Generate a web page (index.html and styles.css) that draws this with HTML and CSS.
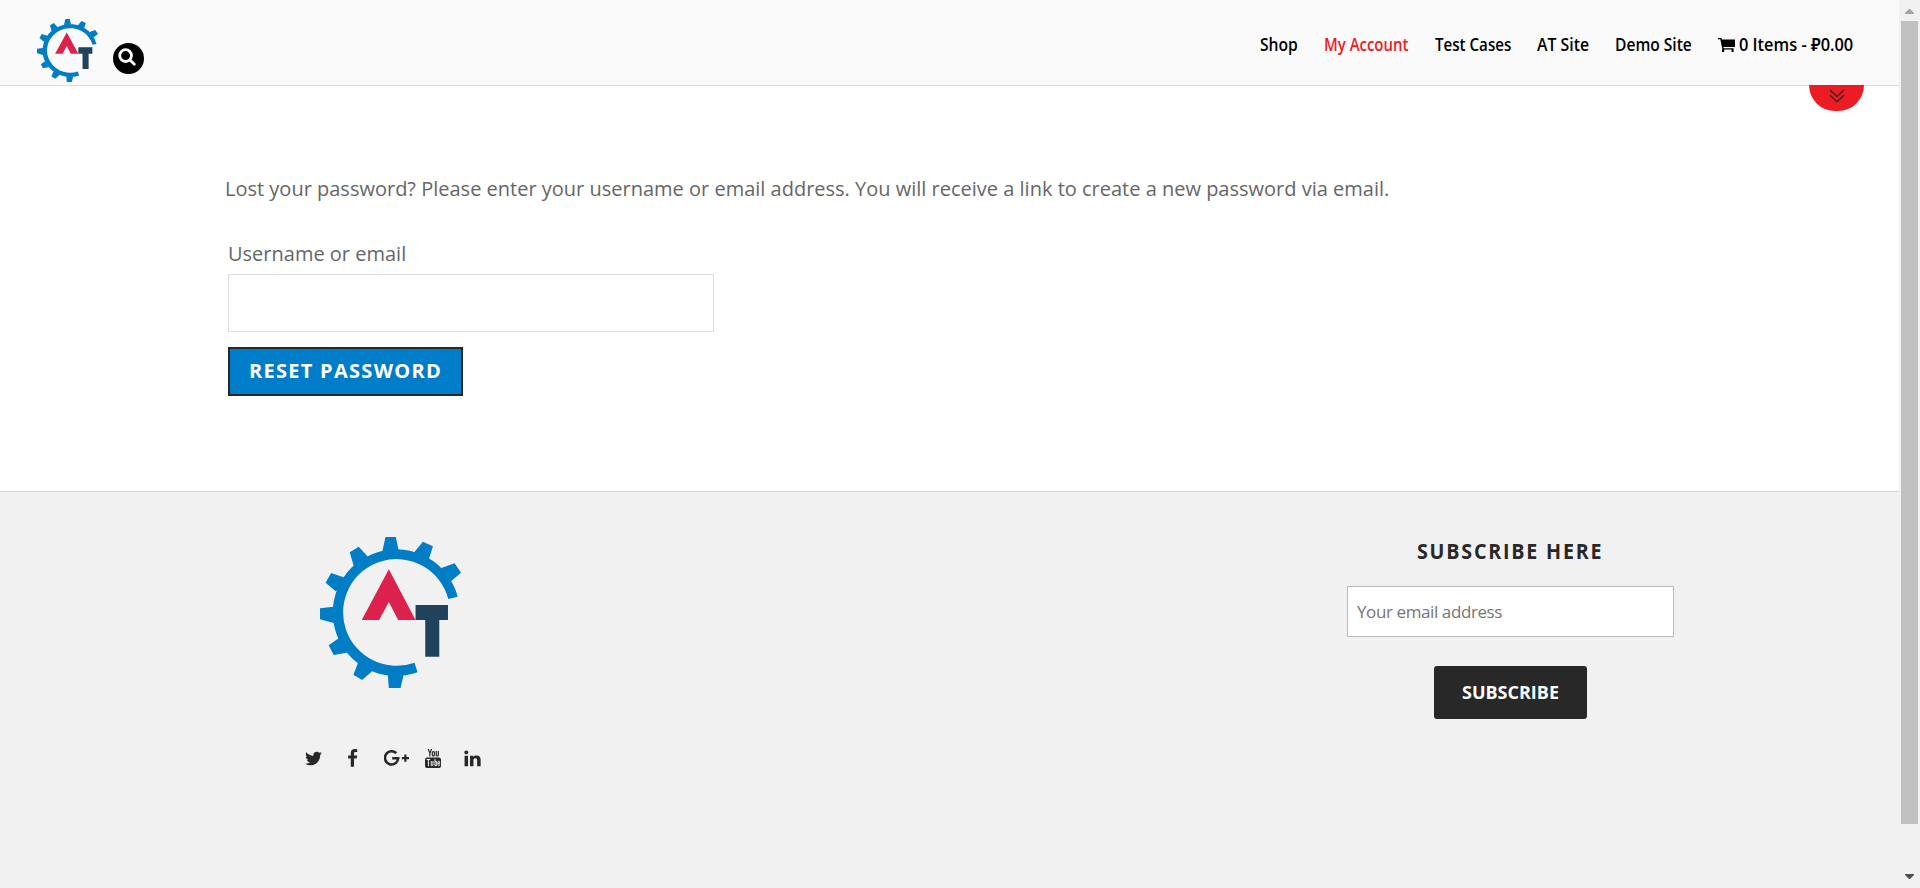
FILE: index.html
```html
<!DOCTYPE html>
<html lang="en">
<head>
<meta charset="utf-8">
<title>My Account</title>
<link rel="stylesheet" href="styles.css">
</head>
<body>
<svg width="0" height="0" class="defs" aria-hidden="true">
  <symbol id="logo" viewBox="61 51 422 453" preserveAspectRatio="none">
    <g fill="#007dc5">
      <path d="M473 230A190 190 0 1 0 353 457L344 428A160 160 0 1 1 445 237Z"/>
      <path d="M248 92L257 51H288L296 90L272 105ZM343 97L369 65L399 79L387 117L365 115ZM424 144L464 130L483 158L454 183L435 170ZM162 138L150 97L177 80L203 109L185 130ZM108 214L78 188L94 159L132 172L125 200ZM102 309L61 298V265L101 260L115 285ZM141 398L102 405L87 376L117 355L138 375ZM217 454L187 480L161 464L175 428L200 435ZM311 466L302 504H267L264 465L285 450Z"/>
    </g>
    <path fill="#dc214c" d="M267 148L347 300H295L267 246L238 300H186Z"/>
    <path fill="#20425a" d="M347 255H444V300H418V410H376V300H347Z"/>
  </symbol>
</svg>
<div class="window">
  <div class="page">
    <header class="header">
      <div class="brand">
        <svg class="logo-small"><use href="#logo"/></svg>
        <span class="search"><svg viewBox="0 0 18 18"><circle cx="7.6" cy="7.6" r="5.9"/><path d="M12 12l4.300 4.200"/></svg></span>
      </div>
      <nav class="nav">
        <a class="n1">Shop</a><a class="n2 active">My Account</a><a class="n3">Test Cases</a><a class="n4">AT Site</a><a class="n5">Demo Site</a>
        <svg class="cart" viewBox="0 0 17 15"><path d="M0 0h3.400l.5 1.400H17v7.600H5.300l.3 1.300h10v1.200H4.400L2.300 1.300H0zM4 11.400h2.200v2.600H4zM13.600 11.400h2v2.600h-2z"/></svg><a class="n6">0 Items - ₽0.00</a>
      </nav>
      <div class="toggle"><svg viewBox="0 0 16 14"><path d="M1 1l7 6.500L15 1M1 6.200l7 6.500 7-6.500"/></svg></div>
    </header>
    <main class="main">
      <p class="message">Lost your password? Please enter your username or email address. You will receive a link to create a new password via email.</p>
      <form class="form">
        <label for="user">Username or email</label>
        <input id="user" class="user" type="text">
        <button class="reset" type="button">RESET PASSWORD</button>
      </form>
    </main>
    <footer class="footer">
      <div class="about">
        <svg class="logo-big"><use href="#logo"/></svg>
        <div class="social">
          <svg class="ic" viewBox="0 0 1792 1792"><path d="M1684 408q-67 98-162 167 1 14 1 42 0 130-38 259.500t-115.500 248.500-184.500 210.500-258 146-323 54.500q-271 0-496-145 35 4 78 4 225 0 401-138-105-2-188-64.500t-114-159.500q33 5 61 5 43 0 85-11-112-23-185.500-111.500t-73.500-205.500v-4q68 38 146 41-66-44-105-115t-39-154q0-88 44-163 121 149 294.500 238.500t371.500 99.500q-8-38-8-74 0-134 94.500-228.500t228.500-94.500q140 0 236 102 109-21 205-78-37 115-142 178 93-10 186-50z"/></svg>
          <svg class="ic" viewBox="0 0 1792 1792"><path d="M1343 12v264h-157q-86 0-116 36t-30 108v189h293l-39 296h-254v759h-306v-759h-255v-296h255v-218q0-186 104-288.500t277-102.500q147 0 228 12z"/></svg>
          <svg class="ic gplus" viewBox="0 0 25 18"><path class="g" d="M12.300 4.200A6.600 6.600 0 1 0 14.200 9.200H8.200"/><path d="M20.300 5.600h2.200v2.500H25v2.200h-2.500v2.500h-2.200v-2.500h-2.500V8.100h2.500z"/></svg>
          <svg class="ic yt" viewBox="0 0 16 19"><g fill="none" stroke="#282828" stroke-width="1.200"><path d="M3.200 0l1.700 4.200L6.600 0M4.900 4v3.500"/><rect x="7.300" y="2.600" width="2.100" height="4.300" rx="1"/><path d="M11.200 2v4.200q0 .8.8.8t1.300-.7V2"/></g><rect y="8.600" width="16" height="10.400" rx="2"/><g fill="none" stroke="#f1f1f1"><path d="M1.600 10.500h3.600M3.400 10.500v6.600M6.200 12v4q0 .8.600.8t1.200-.7V12M10 10v7M10 12.500q1.700-.6 1.700.5v3q0 1.200-1.700.5M14.600 15.500q0 1.200-.8 1.200t-.8-1v-2.500q0-1 .8-1t.8 1v1.200H13"/></g></svg>
          <svg class="ic" viewBox="0 0 1792 1792"><path d="M477 625v991h-330v-991h330zm21-306q1 73-50.500 122t-135.500 49h-2q-82 0-132-49t-50-122q0-74 51.500-122.500t134.500-48.500 133 48.500 51 122.500zm1166 729v568h-329v-530q0-105-40.500-164.500t-126.500-59.500q-63 0-105.500 34.500t-63.500 85.500q-11 30-11 81v553h-329q2-399 2-647t-1-296l-1-48h329v144h-2q20-32 41-56t56.500-52 87-43.500 114.500-15.500q171 0 275 113.500t104 332.500z"/></svg>
        </div>
      </div>
      <form class="newsletter">
        <h4>SUBSCRIBE HERE</h4>
        <input class="email" type="email" placeholder="Your email address">
        <button class="subscribe" type="button">SUBSCRIBE</button>
      </form>
    </footer>
  </div>
  <div class="scrollbar">
    <svg class="arrow up" viewBox="0 0 9 5"><path d="M4 0h1l4 4v1H0V4z"/></svg>
    <div class="thumb"></div>
    <svg class="arrow down" viewBox="0 0 9 5"><path d="M0 0h9v1L5 5H4L0 1z"/></svg>
  </div>
</div>
</body>
</html>
```
FILE: styles.css
```css
* { box-sizing: border-box; }
body { margin: 0; font-family: "Open Sans", "Noto Sans", sans-serif; overflow: hidden; background: #fff; }
.defs { display: block; height: 0; }
.window { display: flex; height: 888px; }
.page { flex: 1; display: flex; flex-direction: column; }
.header { position: relative; height: 86px; background: #fafafa; border-bottom: 1px solid #ddd; display: flex; justify-content: space-between; }
.brand { display: flex; padding: 19px 0 0 37px; gap: 15px; }
.logo-small { width: 61px; height: 63px; }
.search { width: 31px; height: 31px; margin-top: 24px; border-radius: 50%; background: #000; padding: 5px; }
.search svg { display: block; width: 18px; height: 18px; fill: none; stroke: #fff; stroke-width: 2.8; stroke-linecap: round; }
.nav { display: flex; padding: 31px 45px 0 0; height: 58px; line-height: 27px; font-size: 18px; font-weight: 600; color: #000; }
.nav a { white-space: nowrap; transform-origin: left center; }
.nav .active { color: #ed1c24; }
.n1 { width: 64px; transform: scaleX(.87); }
.n2 { width: 111px; transform: scaleX(.83); }
.n3 { width: 102px; transform: scaleX(.84); }
.n4 { width: 78px; transform: scaleX(.88); }
.n5 { width: 103px; transform: scaleX(.865); }
.n6 { width: 115px; transform: scaleX(.91); }
.cart { width: 17px; height: 15px; margin: 7px 4px 0 0; }
.toggle { position: absolute; left: 1809px; top: 85px; width: 55px; height: 26px; background: #ed1c24; border-radius: 0 0 28px 28px; padding: 4px 0 0 20px; }
.toggle svg { display: block; width: 16px; height: 14px; fill: none; stroke: #222; stroke-width: 1.2; }
.main { height: 405px; padding: 86px 224px 0; color: #666; font-size: 20px; line-height: 34px; }
.message { margin: 0; padding-left: 1px; white-space: nowrap; }
.form { display: flex; flex-direction: column; align-items: flex-start; padding: 31px 0 0 4px; }
.form label { height: 37px; }
.user { width: 486px; height: 58px; border: 1px solid #ddd; background: #fff; }
.reset { width: 235px; height: 49px; margin-top: 15px; padding: 0 0 2px; border: 2px solid #282828; background: #007dc9; color: #fff; font: 700 20px "Open Sans", sans-serif; letter-spacing: 1.3px; }
.footer { flex: 1; border-top: 1px solid #d5d5d5; background: #f1f1f1; display: flex; justify-content: space-between; padding: 45px 225px 0 304px; }
.about { width: 180px; }
.logo-big { display: block; width: 141px; height: 151px; margin-left: 16px; }
.social { display: flex; align-items: center; height: 20px; margin-top: 60px; }
.ic { width: 19px; height: 19px; fill: #282828; margin-right: 20px; flex: none; }
.gplus { width: 25px; height: 18px; margin: 0 16px 0 2px; }
.gplus .g { fill: none; stroke: #282828; stroke-width: 2.6; }
.yt { width: 16px; margin-right: 22px; }
.newsletter { width: 327px; display: flex; flex-direction: column; align-items: center; }
.newsletter h4 { margin: 0; height: 49px; line-height: 26px; font-size: 22px; font-weight: 700; color: #282828; letter-spacing: 2px; white-space: nowrap; transform: scaleX(.895); }
.email { width: 327px; height: 51px; border: 1px solid #bbb; background: #fff; padding: 0 9px; font: 17px "Open Sans", sans-serif; letter-spacing: -.4px; }
.email::placeholder { color: #757575; }
.subscribe { width: 153px; height: 53px; margin-top: 29px; padding: 0 0 1px; border: 0; border-radius: 3px; background: #282828; color: #fff; font: 700 18px "Open Sans", sans-serif; }
.scrollbar { width: 21px; background: #f1f1f1; padding: 9px 2px 9px; display: flex; flex-direction: column; align-items: center; }
.arrow { width: 9px; height: 5px; }
.up { fill: #a3a3a3; }
.down { fill: #505050; margin-top: auto; }
.thumb { width: 17px; height: 803px; margin-top: 7px; background: #c1c1c1; }
```
